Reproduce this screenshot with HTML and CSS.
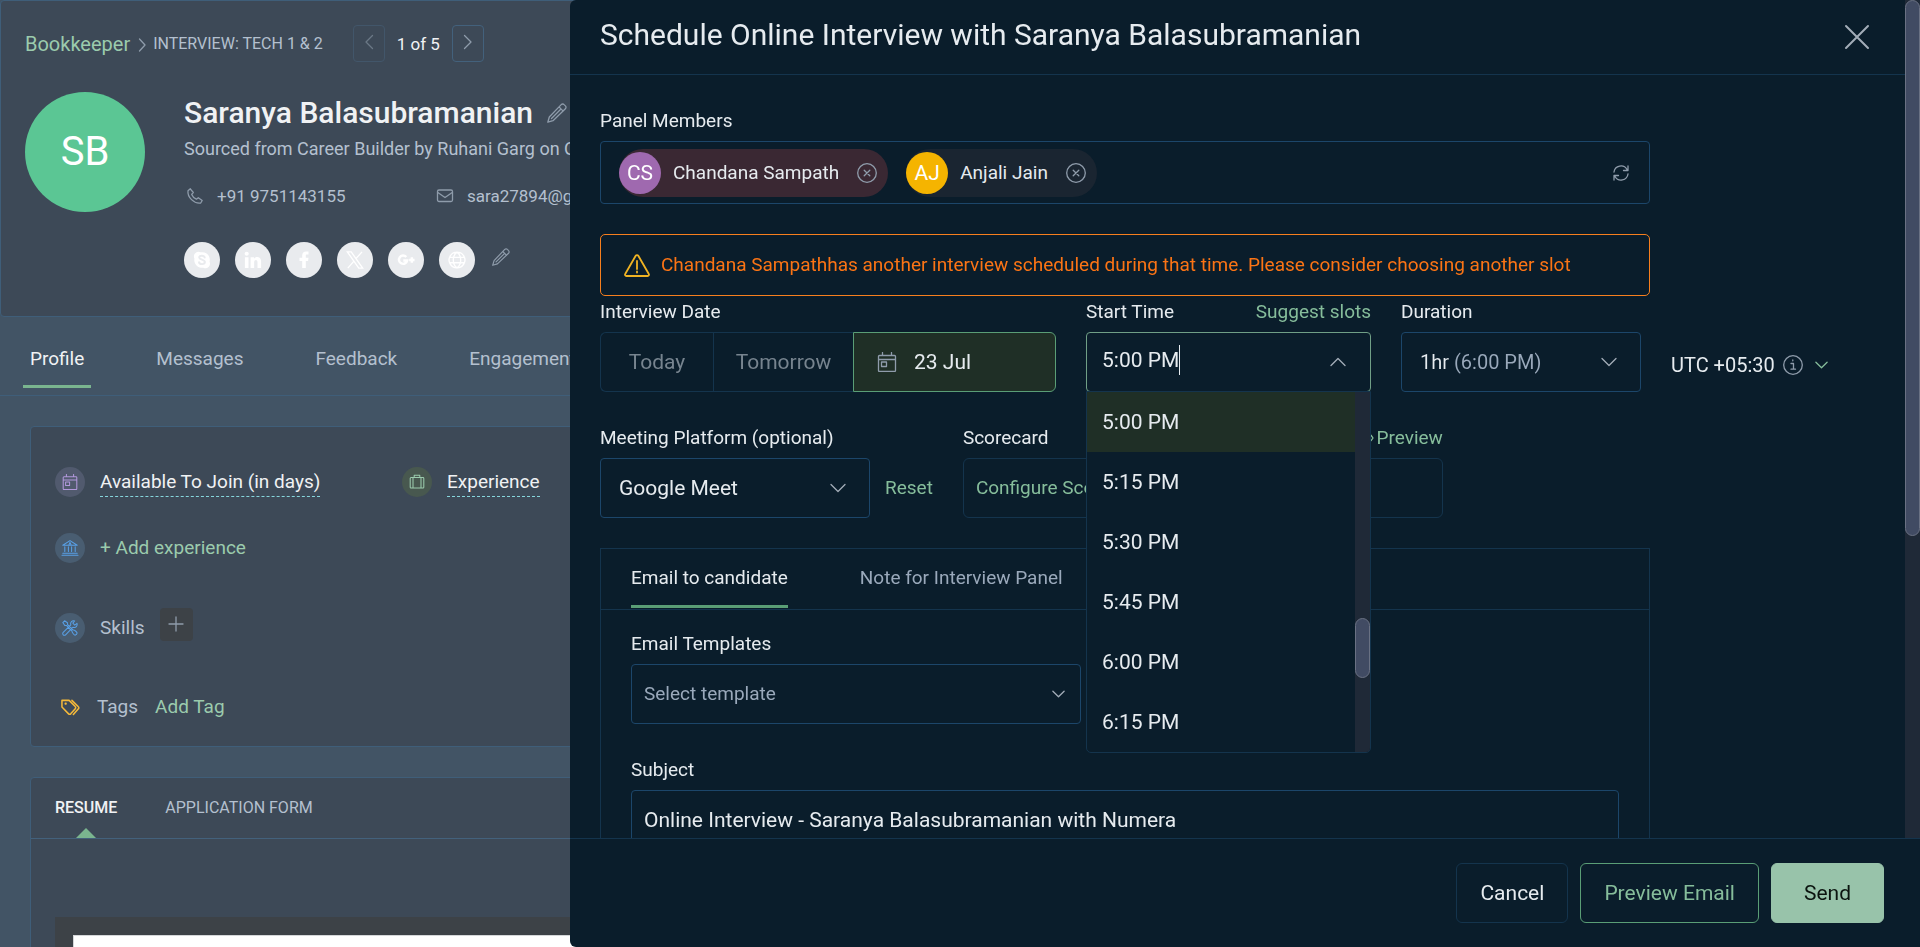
FILE: index.html
```html
<!DOCTYPE html>
<html lang="en">
<head>
    <meta charset="UTF-8">
    <meta name="viewport" content="width=device-width, initial-scale=1.0">
    <title>Schedule Online Interview</title>
    <link rel="stylesheet" href="styles.css">
</head>
<body>
    <!-- Shared icons -->
    <svg class="sprite" aria-hidden="true">
        <symbol id="i-down" viewBox="0 0 16 10"><path d="M1 1.5 8 8.5 15 1.5"/></symbol>
        <symbol id="i-up" viewBox="0 0 16 10"><path d="M1 8.5 8 1.5 15 8.5"/></symbol>
        <symbol id="i-calendar" viewBox="0 0 20 20">
            <path d="M2.5 3.5h15a1 1 0 0 1 1 1v14a1 1 0 0 1-1 1h-15a1 1 0 0 1-1-1v-14a1 1 0 0 1 1-1zM1.5 7.5h17M5.5.5v3M14.5.5v3"/>
            <path d="M4.5 10h5v4.5h-5z"/>
        </symbol>
        <symbol id="i-pencil" viewBox="0 0 20 20">
            <path d="M.8 19.200l1.500-5.200L14.200 1.600a2 2 0 0 1 2.900 0l1.300 1.300a2 2 0 0 1 0 2.900L6 17.700zM12 3.900l4.200 4.200M4.500 15.500 13.200 6.800"/>
        </symbol>
        <symbol id="i-remove" viewBox="0 0 20 20"><circle cx="10" cy="10" r="9.300"/><path d="M7.200 7.200l5.600 5.600M12.800 7.200l-5.600 5.600"/></symbol>
    </svg>

    <div class="profile">
        <section class="profile-card">
            <nav class="breadcrumb">
                <a class="crumb-job" href="#">Bookkeeper</a>
                <svg class="icon crumb-sep" viewBox="0 0 8 14"><path d="M1.5 1 7 7l-5.5 6"/></svg>
                <span class="crumb-stage">INTERVIEW: TECH 1 &amp; 2</span>
                <div class="pager">
                    <button class="pager-btn" disabled aria-label="Previous"><svg class="icon" viewBox="0 0 8 14"><path d="M7.5 .5 1 7l6.5 6.5"/></svg></button>
                    <span>1 of 5</span>
                    <button class="pager-btn" aria-label="Next"><svg class="icon" viewBox="0 0 8 14"><path d="M.5 .5 7 7 .5 13.5"/></svg></button>
                </div>
            </nav>
            <div class="person">
                <div class="avatar">SB</div>
                <div class="person-info">
                    <div class="person-name">
                        <h1>Saranya Balasubramanian</h1>
                        <svg class="icon icon-20"><use href="#i-pencil"/></svg>
                    </div>
                    <p class="person-source">Sourced from Career Builder by Ruhani Garg on Oct 12</p>
                    <div class="contacts">
                        <span class="contact">
                            <svg class="icon" viewBox="0 0 16 16"><path d="M1 2.8 3.3.8l3 3.700-1.600 1.900c.8 2 2.600 3.900 4.700 4.800l1.900-1.500 3.900 2.800-1.500 2.500C7 16 .2 9 1 2.800z"/></svg>
                            +91 9751143155
                        </span>
                        <span class="contact">
                            <svg class="icon" viewBox="0 0 16 16"><rect x=".5" y="2" width="15" height="11.500" rx="1.500"/><path d="M.8 4.500 8 9.500l7.200-5"/></svg>
                            sara27894@gmail.com
                        </span>
                    </div>
                    <div class="socials">
                        <a class="social" href="#" aria-label="Skype"><svg viewBox="0 0 20 20"><path fill="#fff" d="M1 6a5 5 0 0 1 7.500-4.500A8.500 8.500 0 0 1 18.400 12 5 5 0 0 1 11.500 18.500 8.500 8.500 0 0 1 1.600 8.500 5 5 0 0 1 1 6z"/><path fill="none" stroke="#e9ebee" stroke-width="2.200" stroke-linecap="round" d="M13 7.300C12.500 4.500 6.800 4.500 6.900 7.300c.1 2.700 6.300 2 6.300 5 0 3-6 3-6.500.2"/></svg></a>
                        <a class="social" href="#" aria-label="LinkedIn"><svg viewBox="0 0 20 20"><g fill="#fff"><circle cx="3" cy="3" r="2.300"/><path d="M1 7h4v12H1zM7.300 7h3.800v1.700C12.500 6 19 5.500 19 11.500V19h-4v-6.500c0-3.500-3.700-3.200-3.700 0V19h-4z"/></g></svg></a>
                        <a class="social" href="#" aria-label="Facebook"><svg viewBox="0 0 20 20"><path fill="#fff" d="M8 19v-8H5V7.500h3V5c0-3 1.700-4.500 4.400-4.500H15V4h-1.800C12.200 4 12 4.500 12 5.300v2.200h3l-.5 3.500H12v8z"/></svg></a>
                        <a class="social" href="#" aria-label="X"><svg viewBox="0 0 20 20"><path fill="none" stroke="#fff" stroke-width="1.500" d="M1.500 1h4.300l12.700 18h-4.300zM17.800 1l-7 7.800M8.800 11.300 2 19"/></svg></a>
                        <a class="social" href="#" aria-label="Google Plus"><svg viewBox="0 0 20 20"><path fill="none" stroke="#fff" stroke-width="2.700" d="M10.300 6.700A4.600 4.600 0 1 0 11.300 10.500H7M13.500 10h6M16.500 7v6"/></svg></a>
                        <a class="social" href="#" aria-label="Website"><svg viewBox="0 0 20 20"><path fill="none" stroke="#fff" stroke-width="1.500" d="M10 1.200a8.800 8.800 0 1 0 .01 0zM10 1.200c-5.500 4-5.500 13.600 0 17.600c5.500-4 5.500-13.600 0-17.600zM2 7h16M2 13h16"/></svg></a>
                        <svg class="icon icon-20"><use href="#i-pencil"/></svg>
                    </div>
                </div>
            </div>
        </section>

        <nav class="profile-tabs">
            <a class="profile-tab active" href="#">Profile</a>
            <a class="profile-tab" href="#">Messages</a>
            <a class="profile-tab" href="#">Feedback</a>
            <a class="profile-tab" href="#">Engagement</a>
        </nav>

        <div class="cards">
            <section class="card details">
                <div class="detail-cols">
                    <div class="detail">
                        <span class="badge badge-purple"><svg class="icon"><use href="#i-calendar"/></svg></span>
                        <span class="dashed">Available To Join (in days)</span>
                    </div>
                    <div class="detail">
                        <span class="badge badge-green"><svg class="icon" viewBox="0 0 20 20"><path d="M2.500 4.500h15a1 1 0 0 1 1 1v11a1 1 0 0 1-1 1h-15a1 1 0 0 1-1-1v-11a1 1 0 0 1 1-1zM5 4.500v13M15 4.500v13M6.500 4.500v-3h7v3"/></svg></span>
                        <span class="dashed">Experience</span>
                    </div>
                </div>
                <div class="detail detail-exp">
                    <span class="badge badge-blue"><svg class="icon" viewBox="0 0 20 20"><path d="M1 6.500 10 .8l9 5.700zM0 19h20M1 16.500h18M3.500 8.500v6M8 8.500v6M12 8.500v6M16.500 8.500v6M8.500 6.500 10 3l1.500 3.500"/></svg></span>
                    <a class="link" href="#">+ Add experience</a>
                </div>
                <div class="detail detail-skills">
                    <span class="badge badge-blue"><svg class="icon" viewBox="0 0 20 20"><path d="M1 3.200 3.200 1 6.800 3.500l.2 2.300L14 12.500c1.500-.3 5.500 3 4.800 4.300-.3 1-1 1.700-2 2-1.300.7-4.600-3.300-4.300-4.800L5.800 7l-2.300-.2zM18.800 4.200 16 6.500 13.500 4l2.300-2.800c-3-1-6 1.500-4.800 5L1.500 15.500a2 2 0 0 0 3 3L13.800 9c3.500 1.200 6-1.800 5-4.800z"/></svg></span>
                    <span>Skills</span>
                    <button class="add-btn" aria-label="Add skill"><svg class="icon" viewBox="0 0 14 14"><path d="M7 0v14M0 7h14"/></svg></button>
                </div>
                <div class="detail detail-tags">
                    <svg class="icon tag-icon" viewBox="0 0 20 20"><path d="M1 2.500h7.500l6.500 6.500a1.500 1.500 0 0 1 0 2.200l-4.800 5.500a1.500 1.500 0 0 1-2.200 0L1 9.500zM11.500 2.500l6.800 6.700a1.500 1.500 0 0 1 0 2.200l-5.300 6M4.500 5.500h.8v.8h-.8z"/></svg>
                    <span>Tags</span>
                    <a class="link" href="#">Add Tag</a>
                </div>
            </section>

            <section class="card resume">
                <nav class="resume-tabs">
                    <a class="resume-tab active" href="#">RESUME</a>
                    <a class="resume-tab" href="#">APPLICATION FORM</a>
                </nav>
                <div class="viewer"><div class="paper"></div></div>
            </section>
        </div>
    </div>

    <aside class="drawer">
        <div class="drawer-main">
            <div class="drawer-scroll">
                <header class="drawer-header">
                    <h2>Schedule Online Interview with Saranya Balasubramanian</h2>
                    <button class="close-btn" aria-label="Close"><svg class="icon" viewBox="0 0 24 24"><path d="M1 1l22 22M23 1 1 23"/></svg></button>
                </header>

                <form class="drawer-body">
                    <div class="field">
                        <span class="label">Panel Members</span>
                        <div class="members">
                            <div class="chip chip-busy">
                                <span class="chip-avatar">CS</span>
                                <span>Chandana Sampath</span>
                                <button type="button" class="icon-btn" aria-label="Remove Chandana Sampath"><svg class="icon icon-20"><use href="#i-remove"/></svg></button>
                            </div>
                            <div class="chip">
                                <span class="chip-avatar chip-avatar-yellow">AJ</span>
                                <span>Anjali Jain</span>
                                <button type="button" class="icon-btn" aria-label="Remove Anjali Jain"><svg class="icon icon-20"><use href="#i-remove"/></svg></button>
                            </div>
                            <button type="button" class="icon-btn refresh" aria-label="Refresh"><svg class="icon" viewBox="0 0 16 16"><path d="M1 7A7 7 0 0 1 14 4.500M15 1v4.500h-4.500M15 9A7 7 0 0 1 2 11.500M1 15v-4.500h4.500"/></svg></button>
                        </div>
                    </div>

                    <div class="alert" role="alert">
                        <svg class="icon" viewBox="0 0 26 23"><path d="M11.700 1.800a1.500 1.500 0 0 1 2.600 0L24.800 20a1.300 1.300 0 0 1-1.100 2H2.300a1.300 1.300 0 0 1-1.100-2zM13 7v8M13 17.500v1"/></svg>
                        <span>Chandana Sampathhas another interview scheduled during that time. Please consider choosing another slot</span>
                    </div>

                    <div class="row row-when">
                        <div class="field">
                            <span class="label">Interview Date</span>
                            <div class="dates">
                                <button type="button" class="date date-today">Today</button>
                                <button type="button" class="date date-tomorrow">Tomorrow</button>
                                <button type="button" class="date date-picked"><svg class="icon icon-20"><use href="#i-calendar"/></svg>23 Jul</button>
                            </div>
                        </div>
                        <div class="field field-start">
                            <div class="label-row">
                                <label class="label" for="start">Start Time</label>
                                <a class="link" href="#">Suggest slots</a>
                            </div>
                            <div class="combo">
                                <input id="start" type="text" role="combobox" aria-expanded="true" aria-controls="times" value="5:00 PM">
                                <svg class="icon chevron"><use href="#i-up"/></svg>
                                <div class="menu">
                                    <ul id="times" role="listbox">
                                        <li role="option" class="selected" aria-selected="true">5:00 PM</li>
                                        <li role="option">5:15 PM</li>
                                        <li role="option">5:30 PM</li>
                                        <li role="option">5:45 PM</li>
                                        <li role="option">6:00 PM</li>
                                        <li role="option">6:15 PM</li>
                                    </ul>
                                    <div class="menu-track"><div class="thumb menu-thumb"></div></div>
                                </div>
                            </div>
                        </div>
                        <div class="field field-duration">
                            <label class="label" for="duration">Duration</label>
                            <div class="select">
                                <select id="duration" class="two-tone"><option>1hr (6:00 PM)</option></select>
                                <svg class="icon chevron"><use href="#i-down"/></svg>
                            </div>
                        </div>
                        <div class="timezone">
                            <span>UTC +05:30</span>
                            <svg class="icon icon-20" viewBox="0 0 20 20"><circle cx="10" cy="10" r="9.300"/><path d="M8 8.500h2.500V14M8 14.200h4.500M9.800 5v.8"/></svg>
                            <button type="button" class="icon-btn" aria-label="Change time zone"><svg class="icon chevron-sm"><use href="#i-down"/></svg></button>
                        </div>
                    </div>

                    <div class="row row-platform">
                        <div class="field field-platform">
                            <label class="label" for="platform">Meeting Platform (optional)</label>
                            <div class="select">
                                <select id="platform"><option>Google Meet</option></select>
                                <svg class="icon chevron"><use href="#i-down"/></svg>
                            </div>
                        </div>
                        <a class="link reset" href="#">Reset</a>
                        <div class="field field-scorecard">
                            <div class="label-row">
                                <span class="label">Scorecard</span>
                                <a class="link preview" href="#"><svg class="icon" viewBox="0 0 22 16"><path d="M1 8c5-8.500 15-8.500 20 0-5 8.500-15 8.500-20 0z"/><circle cx="11" cy="8" r="3"/></svg>Preview</a>
                            </div>
                            <button type="button" class="scorecard-btn">Configure Scorecard</button>
                        </div>
                    </div>

                    <div class="email-box">
                        <nav class="email-tabs">
                            <a class="email-tab active" href="#">Email to candidate</a>
                            <a class="email-tab" href="#">Note for Interview Panel</a>
                        </nav>
                        <div class="email-body">
                            <div class="field field-template">
                                <label class="label" for="template">Email Templates</label>
                                <div class="select">
                                    <select id="template" class="placeholder"><option>Select template</option></select>
                                    <svg class="icon chevron-sm"><use href="#i-down"/></svg>
                                </div>
                            </div>
                            <div class="field field-subject">
                                <label class="label" for="subject">Subject</label>
                                <input id="subject" class="text-input" type="text" value="Online Interview - Saranya Balasubramanian with Numera">
                            </div>
                        </div>
                    </div>
                </form>
            </div>
            <div class="track"><div class="thumb page-thumb"></div></div>
        </div>
        <footer class="drawer-footer">
            <button class="btn">Cancel</button>
            <button class="btn btn-outline">Preview Email</button>
            <button class="btn btn-primary">Send</button>
        </footer>
    </aside>
</body>
</html>
```
FILE: styles.css
```css
* {
    box-sizing: border-box;
}

body {
    margin: 0;
    height: 100vh;
    overflow: hidden;
    background: #425465;
    color: #b4c0cf;
    font: 19px/24px Roboto, "Liberation Sans", sans-serif;
}

h1, h2, p, ul {
    margin: 0;
    padding: 0;
}

a {
    color: inherit;
    text-decoration: none;
}

button, input, select {
    margin: 0;
    padding: 0;
    font: inherit;
    color: inherit;
    background: none;
    border: none;
    outline: none;
}

.sprite {
    position: absolute;
    width: 0;
    height: 0;
}

.icon {
    flex: none;
    width: 16px;
    height: 16px;
    fill: none;
    stroke: #8f9cab;
    stroke-width: 1.3;
    stroke-linecap: round;
    stroke-linejoin: round;
    overflow: visible;
}

.icon-20 {
    width: 20px;
    height: 20px;
}

.link {
    color: #86bd9b;
}

/* Candidate profile behind the drawer */
.profile {
    height: 100vh;
    overflow: hidden;
}

.profile .link {
    color: #9bcbad;
}

.profile-card {
    padding: 24px 24px 38px;
    background: #3d4957;
    border: 1px solid #3f5e79;
    border-radius: 4px;
}

.breadcrumb {
    display: flex;
    align-items: center;
}

.crumb-job {
    color: #9bcbad;
    font-size: 20px;
}

.crumb-sep {
    width: 8px;
    height: 14px;
    margin: 2px 7px 0 8px;
}

.crumb-stage {
    font-size: 16px;
}

.pager {
    display: flex;
    align-items: center;
    gap: 12px;
    margin-left: 30px;
    color: #f0f2f4;
    font-size: 17px;
}

.pager-btn {
    display: flex;
    align-items: center;
    justify-content: center;
    width: 32px;
    height: 37px;
    padding-bottom: 3px;
    border: 1px solid #43617c;
    border-radius: 4px;
}

.pager-btn .icon {
    width: 8px;
    height: 14px;
}

.pager-btn:disabled {
    border-color: #42566a;
}

.pager-btn:disabled .icon {
    stroke: #6b7886;
}

.person {
    display: flex;
    gap: 39px;
    margin-top: 30px;
}

.avatar {
    display: flex;
    align-items: center;
    justify-content: center;
    flex: none;
    width: 120px;
    height: 120px;
    border-radius: 50%;
    background: #5bc694;
    color: #fff;
    font-size: 40px;
}

.person-info {
    padding-top: 3px;
    white-space: nowrap;
}

.person-name {
    display: flex;
    align-items: center;
    gap: 14px;
    height: 36px;
}

.person-name h1 {
    color: #f0f2f4;
    font-size: 30px;
    font-weight: 500;
    line-height: 36px;
}

.person-source {
    margin-top: 6px;
    font-size: 18px;
}

.contacts {
    display: grid;
    grid-template-columns: 250px 1fr;
    margin-top: 23px;
    font-size: 17px;
}

.contact {
    display: flex;
    align-items: center;
    gap: 14px;
    padding-left: 3px;
}

.socials {
    display: flex;
    align-items: center;
    gap: 15px;
    margin-top: 34px;
}

.social {
    display: flex;
    align-items: center;
    justify-content: center;
    width: 36px;
    height: 36px;
    border-radius: 50%;
    background: #e9ebee;
}

.social svg {
    width: 18px;
    height: 18px;
}

.socials .icon {
    width: 18px;
    height: 18px;
    margin: 0 0 6px 2px;
}

.profile-tabs {
    display: flex;
    gap: 58px;
    padding: 30px 23px 7px;
    border-bottom: 1px solid #3f5e79;
}

.profile-tab {
    padding: 0 7px 14px;
    border-bottom: 3px solid transparent;
}

.profile-tab.active {
    color: #f0f2f4;
    border-color: #7ab58f;
}

.cards {
    display: flex;
    flex-direction: column;
    gap: 30px;
    padding: 30px;
}

.card {
    background: #3d4957;
    border: 1px solid #3f5e79;
    border-radius: 4px;
}

.details {
    padding: 40px 24px 24px;
}

.detail-cols {
    display: grid;
    grid-template-columns: 347px 1fr;
}

.detail {
    display: flex;
    align-items: center;
    gap: 15px;
    height: 30px;
}

.dashed {
    color: #f0f2f4;
    line-height: 28px;
    border-bottom: 1px dashed #86d5dc;
}

.badge {
    display: flex;
    align-items: center;
    justify-content: center;
    width: 30px;
    height: 30px;
    border-radius: 50%;
}

.badge-purple {
    background: #515a6e;
}

.badge-purple .icon {
    stroke: #b298dc;
}

.badge-green {
    background: #48584f;
}

.badge-green .icon {
    stroke: #9bcbad;
}

.badge-blue {
    background: #495d71;
}

.badge-blue .icon {
    stroke: #58a0e6;
}

.detail-exp {
    margin-top: 36px;
}

.detail-skills {
    margin-top: 50px;
}

.add-btn {
    display: flex;
    align-items: center;
    justify-content: center;
    width: 33px;
    height: 33px;
    margin-bottom: 8px;
    border-radius: 4px;
    background: #3d4247;
}

.add-btn .icon {
    width: 14px;
    height: 14px;
}

.detail-tags {
    gap: 17px;
    margin-top: 49px;
    padding-left: 6px;
}

.tag-icon {
    width: 19px;
    height: 19px;
    stroke: #f5b93a;
    stroke-width: 1.6;
}

.resume-tabs {
    display: flex;
    gap: 48px;
    height: 61px;
    padding: 0 24px;
    border-bottom: 1px solid #43617c;
    font-size: 16px;
}

.resume-tab {
    position: relative;
    display: flex;
    align-items: center;
}

.resume-tab.active {
    color: #f0f2f4;
    font-weight: 500;
}

.resume-tab.active::after {
    content: "";
    position: absolute;
    bottom: 0;
    left: calc(50% - 10px);
    border: 10px solid transparent;
    border-top: none;
    border-bottom-color: #7ab58f;
}

.viewer {
    margin: 78px 24px 24px;
    padding: 18px;
    background: #3d4247;
}

.paper {
    height: 800px;
    background: #fff;
    border: 1px solid #d5d7d9;
}

/* Drawer */
.drawer {
    position: fixed;
    top: 0;
    right: 0;
    bottom: 0;
    left: 570px;
    display: flex;
    flex-direction: column;
    background: #0a1d2b;
    color: #e6ebef;
    border-radius: 6px 0 0 6px;
    overflow: hidden;
}

.drawer-main {
    display: flex;
    flex: 1;
    min-height: 0;
}

.drawer-scroll {
    flex: 1;
    overflow: hidden;
}

.track {
    width: 15px;
    background: #1f2937;
}

.thumb {
    background: #414b63;
    border: 1px solid #6a7183;
    border-radius: 8px;
}

.page-thumb {
    height: 64%;
}

.drawer-header {
    display: flex;
    align-items: center;
    justify-content: space-between;
    height: 75px;
    padding: 0 36px 4px 30px;
    border-bottom: 1px solid #14344d;
}

.drawer-header h2 {
    font-size: 30px;
    font-weight: 400;
    line-height: 36px;
}

.close-btn {
    display: flex;
    padding-top: 4px;
}

.close-btn .icon {
    width: 24px;
    height: 24px;
    stroke: #a3adb8;
    stroke-width: 2;
}

.drawer-body {
    padding: 34px 30px;
}

.field {
    display: flex;
    flex-direction: column;
    gap: 8px;
}

.label-row {
    display: flex;
    justify-content: space-between;
}

.icon-btn {
    display: flex;
    cursor: pointer;
}

.members {
    display: flex;
    align-items: center;
    gap: 18px;
    max-width: 1050px;
    height: 63px;
    padding: 0 20px 0 18px;
    border: 1px solid #1c466a;
    border-radius: 4px;
}

.chip {
    display: flex;
    align-items: center;
    height: 48px;
    padding-right: 11px;
    border-radius: 24px;
    background: #1a2531;
}

.chip-busy {
    background: #3a2833;
}

.chip-avatar {
    display: flex;
    align-items: center;
    justify-content: center;
    width: 42px;
    height: 42px;
    margin-right: 12px;
    border-radius: 50%;
    background: #9f69af;
    color: #fff;
    font-size: 21px;
}

.chip-avatar-yellow {
    background: #f5b400;
}

.chip .icon-btn {
    margin-left: 18px;
}

.refresh {
    margin-left: auto;
}

.alert {
    display: flex;
    align-items: center;
    gap: 11px;
    max-width: 1050px;
    height: 62px;
    margin-top: 30px;
    padding: 0 23px;
    border: 1px solid #f77f1e;
    border-radius: 5px;
    color: #fb7415;
}

.alert .icon {
    width: 26px;
    height: 23px;
    stroke: #f0b323;
    stroke-width: 1.8;
}

.row {
    display: flex;
}

.row-when {
    gap: 30px;
    margin-top: 4px;
}

.dates {
    display: flex;
    height: 60px;
    font-size: 21px;
}

.date {
    border: 1px solid #14344d;
    border-right: none;
    color: #77848f;
}

.date-today {
    width: 113px;
    border-radius: 6px 0 0 6px;
}

.date-tomorrow {
    width: 140px;
}

.date-picked {
    display: flex;
    align-items: center;
    gap: 17px;
    width: 203px;
    padding-left: 23px;
    border: 1px solid #5a9e76;
    border-radius: 0 6px 6px 0;
    background: #1f2f26;
    color: #e6ebef;
}

.field-start {
    width: 285px;
}

.combo {
    position: relative;
    display: flex;
    align-items: center;
    justify-content: space-between;
    height: 60px;
    padding: 0 24px 0 15px;
    border: 1px solid #709f86;
    border-radius: 4px;
    font-size: 21px;
}

.combo input {
    field-sizing: content;
    height: 30px;
    margin-bottom: 5px;
    border-right: 1px solid #e6ebef;
}

.chevron {
    width: 16px;
    height: 10px;
    stroke: #a3adb8;
}

.chevron-sm {
    width: 13px;
    height: 8px;
    stroke: #a3adb8;
    stroke-width: 1.6;
}

.menu {
    position: absolute;
    z-index: 5;
    top: 58px;
    left: -1px;
    right: -1px;
    display: flex;
    height: 362px;
    overflow: hidden;
    background: #0a1d2b;
    border: 1px solid #14344d;
    border-radius: 0 0 5px 5px;
}

.menu ul {
    flex: 1;
    list-style: none;
}

.menu li {
    padding-left: 15px;
    line-height: 60px;
}

.menu li.selected {
    background: #1f2f26;
}

.menu-track {
    width: 15px;
    padding-top: 226px;
    background: #1f2937;
}

.menu-thumb {
    height: 60px;
}

.field-duration {
    width: 240px;
}

/* Native select with the chevron laid over its right side */
.select {
    display: grid;
    align-items: center;
    font-size: 21px;
}

.select select {
    grid-area: 1 / 1;
    width: 100%;
    height: 60px;
    padding: 0 18px;
    border: 1px solid #1c466a;
    border-radius: 4px;
    appearance: none;
}

.select .icon {
    grid-area: 1 / 1;
    justify-self: end;
    margin-right: 24px;
    pointer-events: none;
}

.select .two-tone {
    color: transparent;
    background: linear-gradient(90deg, #e6ebef 47px, #9aa9bb 47px);
    background-clip: text;
    font-size: 20px;
}

.two-tone option {
    color: #e6ebef;
    background: #0a1d2b;
}

.timezone {
    display: flex;
    align-items: center;
    gap: 8px;
    height: 60px;
    margin-top: 35px;
    font-size: 20px;
}

.timezone .icon-btn {
    margin-left: 4px;
}

.timezone .chevron-sm {
    stroke: #86bd9b;
}

.row-platform {
    align-items: flex-end;
    margin-top: 31px;
}

.field-platform {
    width: 270px;
}

.reset {
    padding: 0 30px 18px 15px;
}

.field-scorecard {
    width: 480px;
}

.preview {
    display: flex;
    align-items: center;
    gap: 3px;
}

.preview .icon {
    width: 22px;
    stroke: #86bd9b;
}

.scorecard-btn {
    height: 60px;
    padding: 0 12px;
    border: 1px solid #14344d;
    border-radius: 6px;
    color: #86bd9b;
    text-align: left;
}

.email-box {
    max-width: 1050px;
    margin-top: 30px;
    border: 1px solid #14344d;
}

.email-tabs {
    display: flex;
    gap: 72px;
    padding: 17px 30px 1px;
    border-bottom: 1px solid #14344d;
}

.email-tab {
    padding-bottom: 15px;
    border-bottom: 3px solid transparent;
    color: #9aa9bb;
}

.email-tab.active {
    border-color: #5a9e76;
    color: #e6ebef;
}

.email-body {
    display: flex;
    flex-direction: column;
    gap: 34px;
    padding: 22px 30px;
}

.field-template {
    width: 450px;
}

.field-template .select {
    font-size: 19px;
}

.field-template .select select {
    padding: 0 12px;
}

.select .placeholder {
    color: #9aa9bb;
}

.field-template .select .icon {
    margin-right: 16px;
}

.text-input {
    height: 60px;
    padding: 0 12px;
    border: 1px solid #1c466a;
    border-radius: 4px;
    font-size: 21px;
}

.drawer-footer {
    display: flex;
    justify-content: flex-end;
    gap: 12px;
    height: 109px;
    padding: 24px 36px;
    border-top: 1px solid #14344d;
}

.btn {
    height: 60px;
    padding: 0 23px;
    border: 1px solid #14344d;
    border-radius: 6px;
    font-size: 21px;
    cursor: pointer;
}

.btn-outline {
    border-color: #5a9e76;
    color: #86bd9b;
}

.btn-primary {
    padding: 0 32px;
    border-color: #98c3aa;
    background: #98c3aa;
    color: #0b140f;
}
```
